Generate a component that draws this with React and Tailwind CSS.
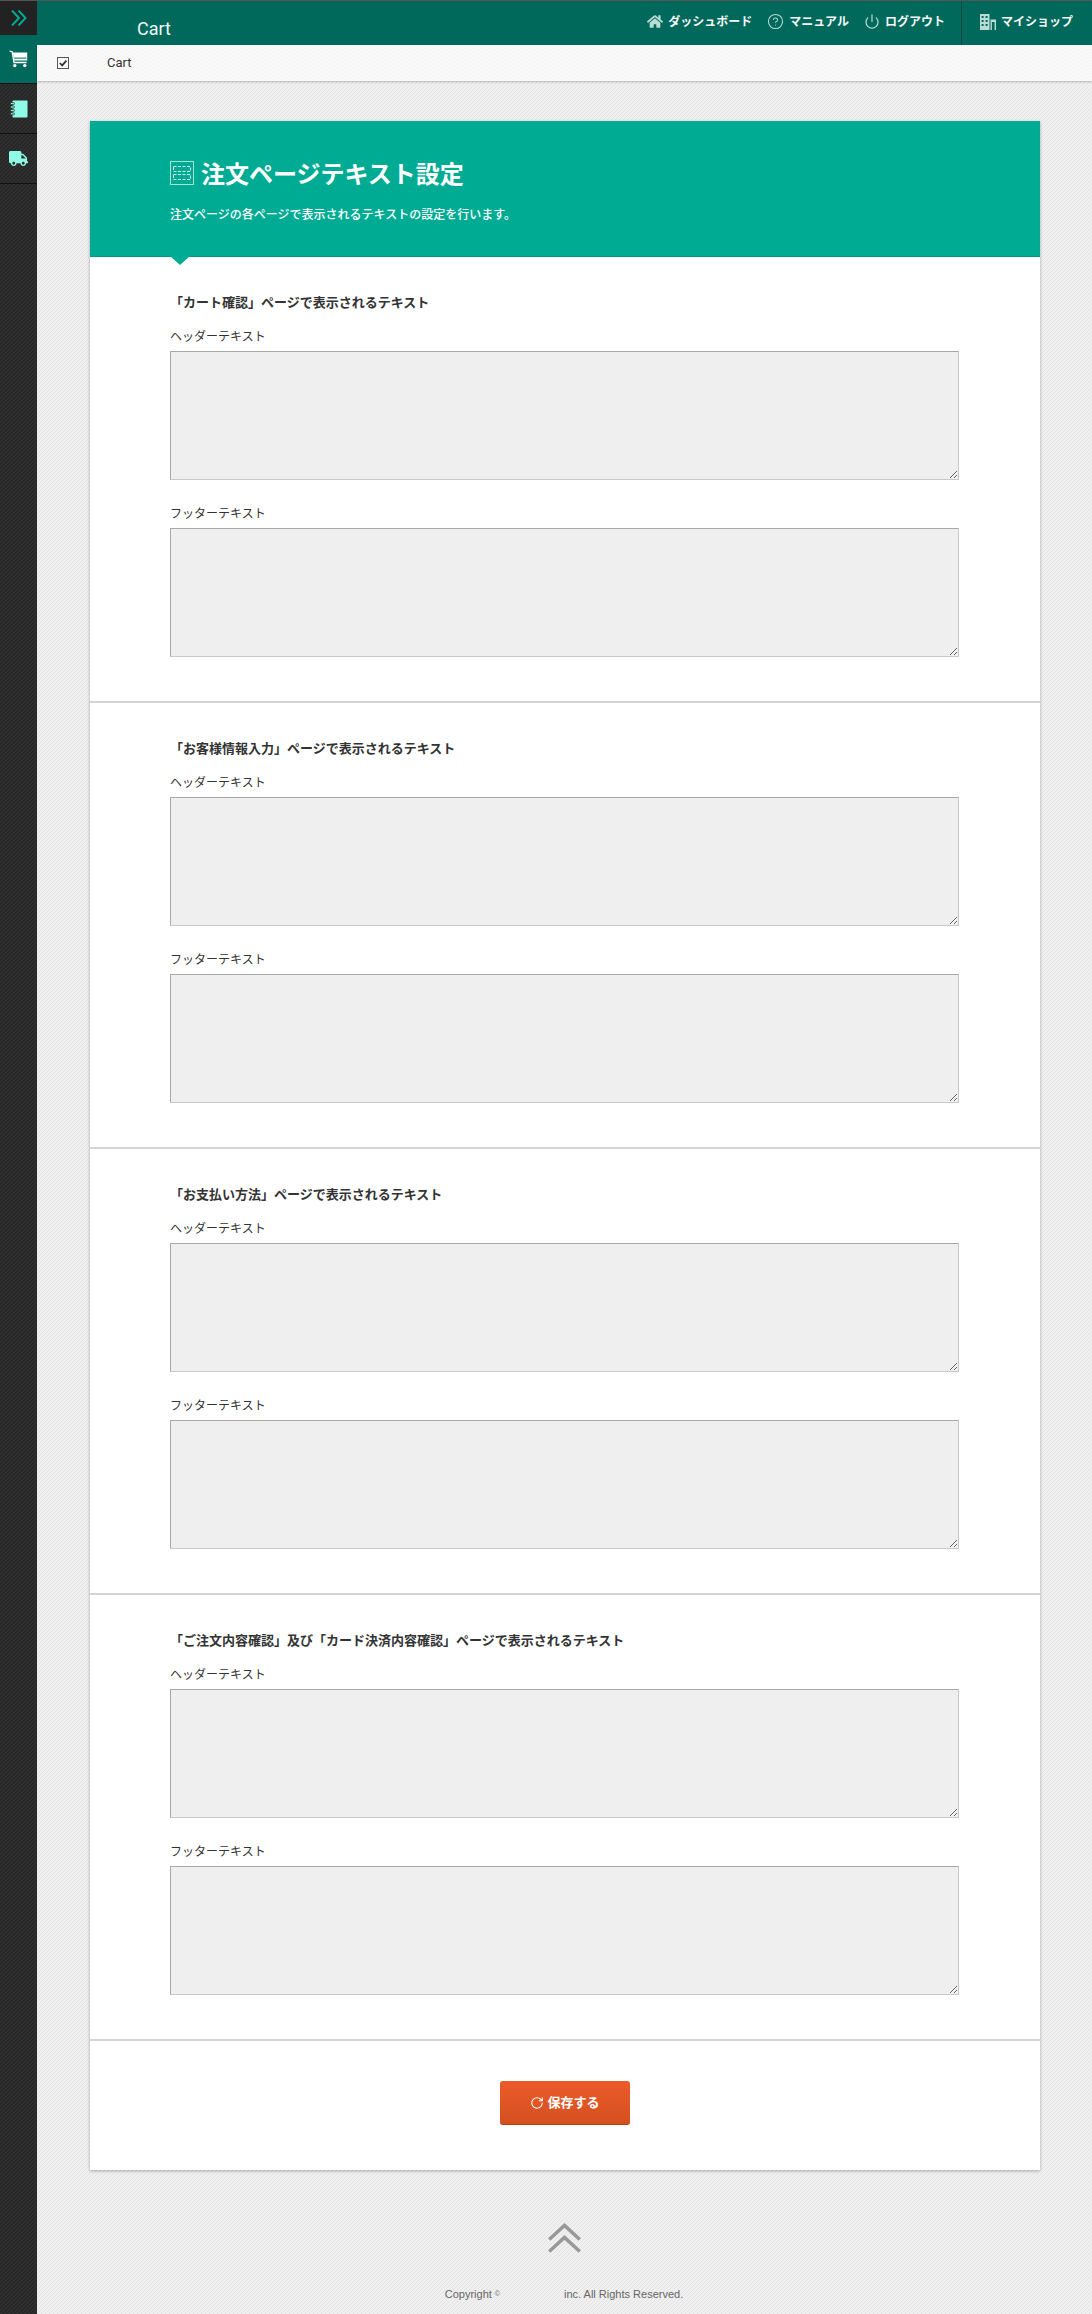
import React from "react";
import { FaTruck, FaHome } from "react-icons/fa";
import { CircleHelp, Power, RotateCw } from "lucide-react";

const stripes =
  "bg-[#ececec] bg-[repeating-linear-gradient(135deg,#f0f0f0_0,#f0f0f0_1.9px,#e2e2e2_1.9px,#e2e2e2_2.8284px)]";

function CartIcon() {
  return (
    <svg width="19" height="18" viewBox="0 0 19 18" fill="none">
      <path d="M0.5 1 L3.2 1.8 L5 12.5 H17.5" stroke="#fff" strokeWidth="1.3" />
      <path d="M3.8 2.6 H18.2 V10.4 H5.2 Z" fill="#fff" />
      <rect x="5" y="7.6" width="12.5" height="1" fill="#00695c" />
      <circle cx="5.8" cy="15.6" r="1.7" fill="#fff" />
      <circle cx="15.8" cy="15.6" r="1.7" fill="#fff" />
    </svg>
  );
}

function NotebookIcon() {
  return (
    <svg width="18" height="18" viewBox="0 0 18 18" fill="#8ffbe6">
      <rect x="2.5" y="0.5" width="15" height="17" rx="0.8" />
      <g stroke="#2b2b2b" strokeWidth="0.8" fill="#8ffbe6">
        <rect x="0.4" y="2.6" width="4" height="2" rx="0.8" />
        <rect x="0.4" y="6" width="4" height="2" rx="0.8" />
        <rect x="0.4" y="9.4" width="4" height="2" rx="0.8" />
        <rect x="0.4" y="12.8" width="4" height="2" rx="0.8" />
      </g>
    </svg>
  );
}

function BuildingIcon() {
  return (
    <svg width="16" height="16" viewBox="0 0 16 16" fill="#b9dcd5">
      <path fillRule="evenodd" d="M0 0 H9.5 V16 H0 Z M1.6 2 V4 H3.6 V2 Z M5.6 2 V4 H7.6 V2 Z M1.6 6 V8 H3.6 V6 Z M5.6 6 V8 H7.6 V6 Z M1.6 10 V12 H3.6 V10 Z M5.6 10 V12 H7.6 V10 Z" />
      <path fillRule="evenodd" d="M10.5 5.5 H16 V16 H14.6 V8 H11.9 V16 H10.5 Z" />
    </svg>
  );
}

function PanelIcon() {
  return (
    <svg width="24" height="24" viewBox="0 0 24 24" fill="none" stroke="#a8e3d8">
      <rect x="0.5" y="0.5" width="23" height="23" strokeWidth="1" />
      <rect x="3.5" y="5.5" width="17" height="5" strokeWidth="1" strokeDasharray="3 1.5" stroke="#d6f3ee" />
      <rect x="3.5" y="13.5" width="17" height="5" strokeWidth="1" strokeDasharray="3 1.5" stroke="#d6f3ee" />
    </svg>
  );
}

function NavItem({ icon, label }) {
  return (
    <div className="flex items-center gap-[5px]">
      {icon}
      <span className="text-[12px] font-bold text-[#f6faf9]">{label}</span>
    </div>
  );
}

function Field({ label }) {
  return (
    <div>
      <div className="text-[12px] leading-[18px] text-[#333] h-[18px]">{label}</div>
      <textarea className="block mt-[5px] w-[789px] h-[129px] bg-[#efefef] border border-[#c9c9c9] border-t-[#a8a8a8] border-l-[#a8a8a8] outline-none resize" />
    </div>
  );
}

function Section({ title }) {
  return (
    <section className="h-[446px] border-b-2 border-[#d4d4d4] pl-[80px] pr-[80px] pt-[37px]">
      <h2 className="text-[13px] leading-[18px] font-bold text-[#333] h-[18px] mb-[16px]">{title}</h2>
      <div className="flex flex-col gap-[25px]">
        <Field label="ヘッダーテキスト" />
        <Field label="フッターテキスト" />
      </div>
    </section>
  );
}

export default function App() {
  return (
    <div className={`relative flex w-[1092px] h-[2314px] overflow-hidden text-[#333] font-['Roboto','Noto_Sans_CJK_JP',sans-serif] ${stripes}`}>
      <aside className="w-[37px] shrink-0 bg-[#2c2c2c] bg-[repeating-linear-gradient(135deg,#2f2f2f_0,#2f2f2f_1.9px,#272727_1.9px,#272727_2.8284px)] flex flex-col border-t border-[#555]">
        <div className="h-[34px] bg-[#222] flex items-center justify-center">
          <svg width="16" height="16" viewBox="0 0 16 16" fill="none" stroke="#00ab94" strokeWidth="2">
            <path d="M1 0.5 L8 8 L1 15.5" />
            <path d="M7.5 0.5 L14.5 8 L7.5 15.5" />
          </svg>
        </div>
        <div className="h-[49px] bg-[#00695c] flex items-center justify-center border-b border-[#111]">
          <CartIcon />
        </div>
        <div className="h-[50px] flex items-center justify-center border-b border-[#111]">
          <NotebookIcon />
        </div>
        <div className="h-[50px] flex items-center justify-center border-b border-[#111]">
          <FaTruck className="w-[19px] h-[17px] text-[#8ffbe6]" />
        </div>
      </aside>

      <div className="flex-1 min-w-0 flex flex-col">
        <header className="h-[45px] bg-[#00695c] border-t border-[#555] flex items-stretch shrink-0">
          <div className="pl-[100px] pt-[15px] text-[18px] leading-[26px] text-[#eef7f5]">Cart</div>
          <div className="ml-auto flex items-center gap-[15px] pb-[3px] mr-[16px]">
            <NavItem icon={<FaHome className="w-[16px] h-[15px] text-[#b9dcd5]" />} label="ダッシュボード" />
            <NavItem icon={<CircleHelp className="w-[17px] h-[17px] text-[#b9dcd5]" strokeWidth={1.5} />} label="マニュアル" />
            <NavItem icon={<Power className="w-[16px] h-[17px] text-[#b9dcd5]" strokeWidth={1.8} />} label="ログアウト" />
          </div>
          <div className="w-[131px] border-l border-[#04493f] flex items-center pl-[18px] pb-[3px]">
            <NavItem icon={<BuildingIcon />} label="マイショップ" />
          </div>
        </header>

        <div className="h-[36px] shrink-0 bg-[#f8f8f8] bg-[repeating-linear-gradient(135deg,#fafafa_0,#fafafa_1.9px,#f3f3f3_1.9px,#f3f3f3_2.8284px)] shadow-[0_1px_2px_rgba(0,0,0,0.25)] flex items-center relative">
          <svg className="ml-[20px]" width="12" height="12" viewBox="0 0 12 12" fill="none">
            <rect x="0.5" y="0.5" width="11" height="11" stroke="#555" />
            <path d="M2.8 6 L5.2 8.4 L9.4 3.6" stroke="#333" strokeWidth="1.7" />
          </svg>
          <span className="ml-[38px] text-[13px] text-[#333]">Cart</span>
        </div>

        <main className="relative w-[950px] ml-[53px] mt-[40px] bg-white shadow-[0_1px_3px_rgba(0,0,0,0.3)] shrink-0">
          <div className="relative h-[136px] bg-[#00ab94] border-b border-[#009983] pl-[80px] pt-[40px]">
            <div className="flex items-start gap-[7px] h-[24px]">
              <PanelIcon />
              <h1 className="text-[24px] leading-[24px] font-bold text-white pt-[2px]">注文ページテキスト設定</h1>
            </div>
            <p className="mt-[21px] text-[12px] leading-[18px] font-medium text-white">
              注文ページの各ページで表示されるテキストの設定を行います。
            </p>
            <div className="absolute left-[80px] top-full w-0 h-0 border-l-[10px] border-r-[10px] border-t-[9px] border-l-transparent border-r-transparent border-t-[#00ab94]" />
          </div>

          <Section title="「カート確認」ページで表示されるテキスト" />
          <Section title="「お客様情報入力」ページで表示されるテキスト" />
          <Section title="「お支払い方法」ページで表示されるテキスト" />
          <Section title="「ご注文内容確認」及び「カード決済内容確認」ページで表示されるテキスト" />

          <div className="h-[129px] flex justify-center pt-[40px]">
            <button className="w-[130px] h-[44px] rounded-[3px] bg-gradient-to-b from-[#ec5a2a] to-[#d4511f] border-b border-[#b03f14] flex items-center justify-center gap-[3px] text-white text-[13px] font-bold">
              <RotateCw className="w-[14px] h-[14px]" strokeWidth={1.8} />
              保存する
            </button>
          </div>
        </main>

        <footer className="flex flex-col items-center w-[948px] ml-[53px]">
          <svg className="mt-[53px]" width="33" height="30" viewBox="0 0 33 30" fill="none" stroke="#999" strokeWidth="3.6">
            <path d="M1.2 16.5 L16.5 2.5 L31.8 16.5" />
            <path d="M1.2 28.5 L16.5 14.5 L31.8 28.5" />
          </svg>
          <div className="mt-[33px] text-[11px] leading-[16px] text-[#666] flex items-center font-['Liberation_Sans','Noto_Sans_CJK_JP',sans-serif]">
            <span>Copyright</span>
            <span className="ml-[3px] text-[7px]">©</span>
            <span className="w-[64px]" />
            <span>inc. All Rights Reserved.</span>
          </div>
        </footer>
      </div>
    </div>
  );
}
